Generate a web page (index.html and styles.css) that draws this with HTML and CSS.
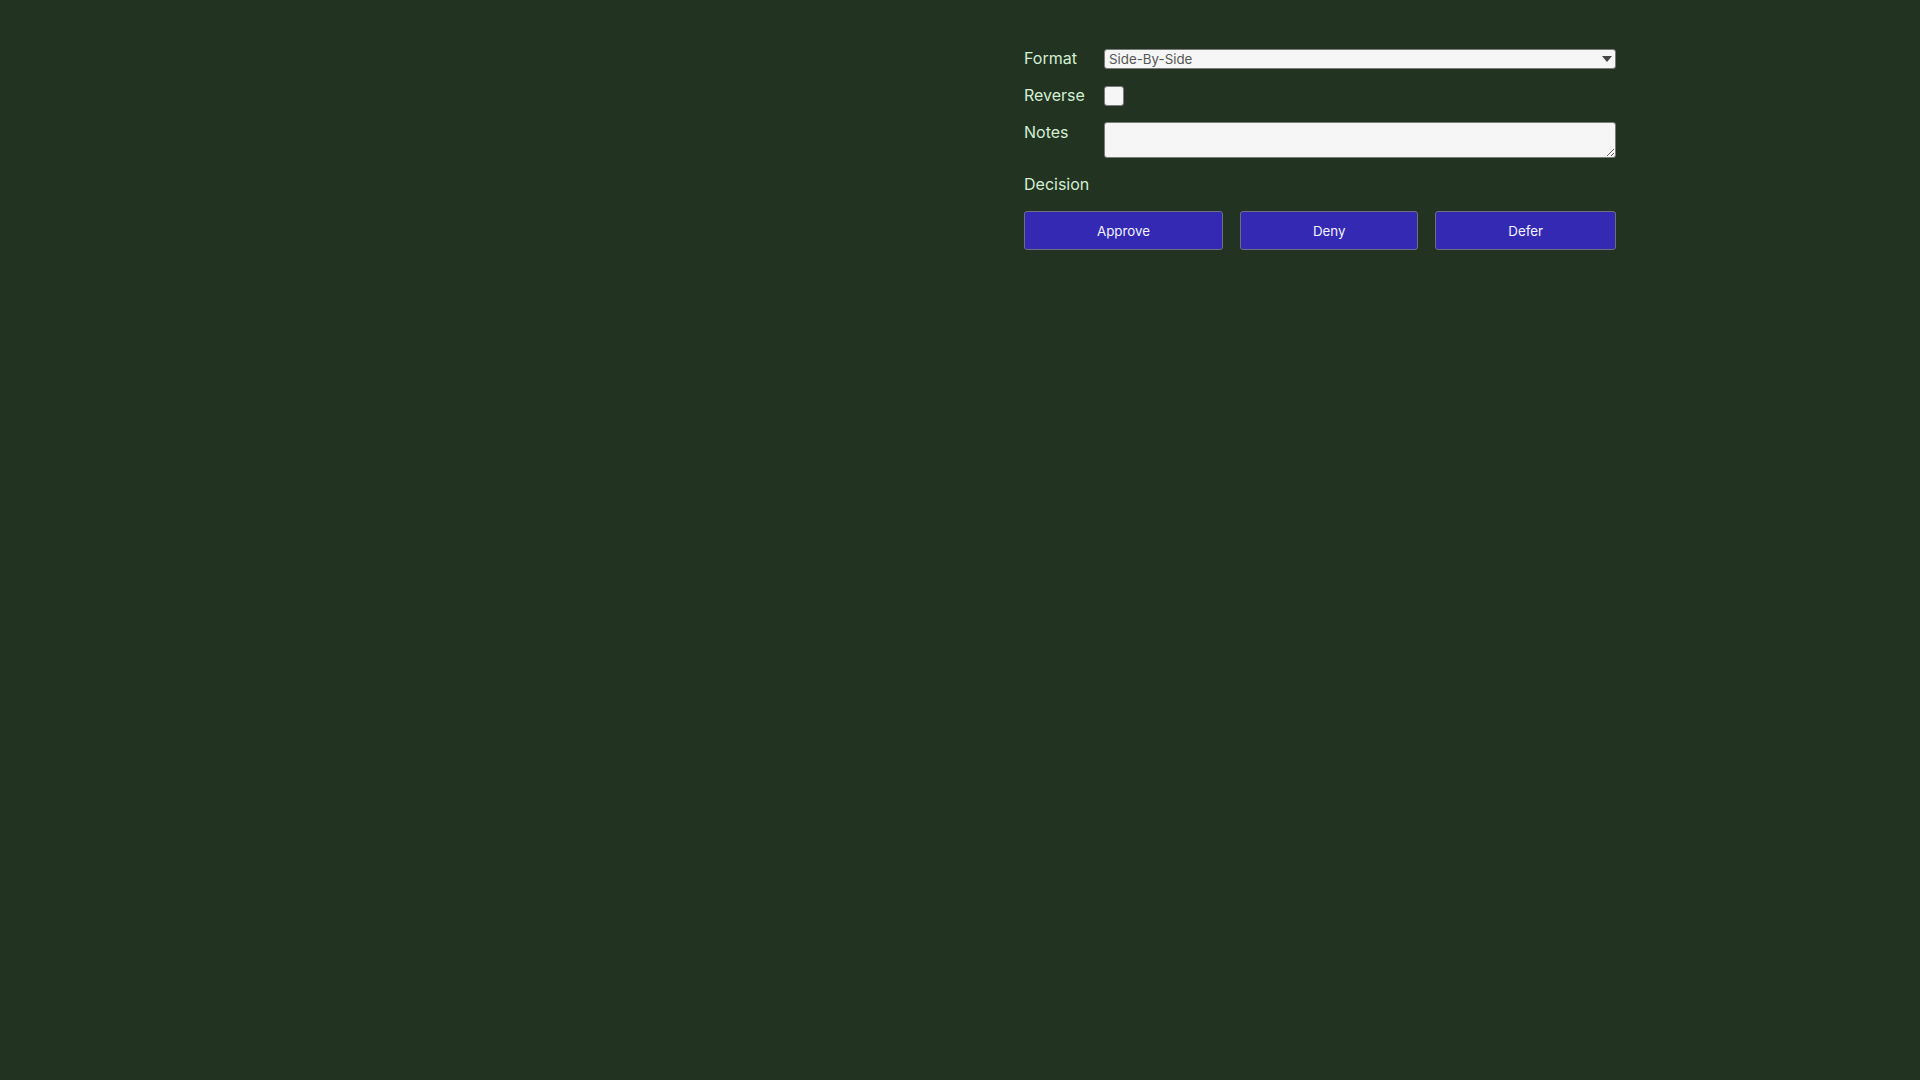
FILE: index.html
```html
<!DOCTYPE html>
<html lang="en">
<head>
<meta charset="utf-8">
<title>Review</title>
<link rel="stylesheet" href="styles.css">
</head>
<body>
<main class="page">
  <form class="panel">
    <div class="field field-format">
      <label class="label" for="format">Format</label>
      <div class="select-wrap">
        <select id="format" class="select">
          <option>Side-By-Side</option>
          <option>Inline</option>
        </select>
        <svg class="select-arrow" width="10" height="6" viewBox="0 0 10 6"><path d="M0 0 L10 0 L5 6 Z" fill="#444"/></svg>
      </div>
    </div>
    <div class="field field-reverse">
      <label class="label" for="reverse">Reverse</label>
      <input id="reverse" class="check" type="checkbox">
    </div>
    <div class="field field-notes">
      <label class="label" for="notes">Notes</label>
      <textarea id="notes" class="notes" rows="2"></textarea>
    </div>
    <div class="decision-label">Decision</div>
    <div class="actions">
      <button type="button" class="btn">Approve</button>
      <button type="button" class="btn">Deny</button>
      <button type="button" class="btn">Defer</button>
    </div>
  </form>
</main>
</body>
</html>
```

FILE: styles.css
```css
html, body {
  margin: 0;
  padding: 0;
  background: #223322;
  height: 100%;
}

body {
  font-family: "Inter", "Liberation Sans", sans-serif;
  color: #d3efd3;
}

.page {
  display: flex;
  justify-content: flex-end;
  padding: 48px 304px 0 0;
}

.panel {
  width: 592px;
  display: flex;
  flex-direction: column;
}

.field {
  display: grid;
  grid-template-columns: 80px 1fr;
  align-items: start;
}

.field-format {
  margin-bottom: 18px;
}

.field-reverse {
  margin-bottom: 16px;
}

.field-notes {
  margin-bottom: 16px;
}

.label {
  font-size: 16px;
  line-height: 20px;
  color: #d3efd3;
}

.field-reverse .label {
  line-height: 18px;
}

.select-wrap {
  position: relative;
  height: 20px;
}

.select {
  appearance: none;
  -webkit-appearance: none;
  box-sizing: border-box;
  width: 100%;
  height: 20px;
  margin: 0;
  padding: 0 20px 0 4px;
  border: 1px solid #7a7a7a;
  border-radius: 3px;
  background: #f6f6f6;
  color: #555555;
  font-family: "Inter", "Liberation Sans", sans-serif;
  font-size: 13.333px;
  line-height: 18px;
}

.select-arrow {
  position: absolute;
  right: 4px;
  top: 8px;
  pointer-events: none;
}

.check {
  appearance: none;
  -webkit-appearance: none;
  box-sizing: border-box;
  width: 20px;
  height: 20px;
  margin: 0;
  border: 1px solid #7a7a7a;
  border-radius: 3px;
  background: #f6f6f6;
}

.notes {
  box-sizing: border-box;
  width: 100%;
  height: 36px;
  margin: 0;
  padding: 2px 4px;
  border: 1px solid #7a7a7a;
  border-radius: 3px;
  background: #f6f6f6;
  color: #333333;
  font-family: "Inter", "Liberation Sans", sans-serif;
  font-size: 13.333px;
  resize: both;
}

.decision-label {
  font-size: 16px;
  line-height: 20px;
  margin-bottom: 17px;
  color: #d3efd3;
}

.actions {
  display: flex;
  gap: 17px;
}

.btn {
  flex: 1 1 auto;
  height: 39px;
  margin: 0;
  padding: 0 12px;
  border: 1px solid #6f6f7f;
  border-radius: 3px;
  background: #3429b3;
  color: #f2f2ff;
  font-family: "Inter", "Liberation Sans", sans-serif;
  font-size: 13.333px;
}
```
